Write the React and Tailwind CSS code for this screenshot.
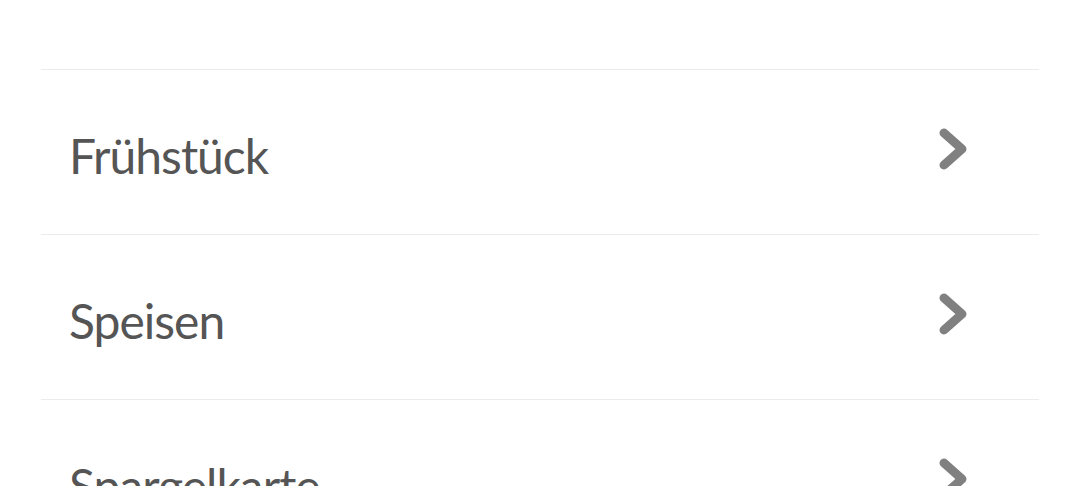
const items = ['Frühstück', 'Speisen', 'Spargelkarte'];

function Chevron() {
  return (
    <svg width="32" height="46" viewBox="0 0 32 46" className="-mt-[6px]">
      <path d="M7 7 L25 23 L7 39" fill="none" stroke="#808080" strokeWidth="9" strokeLinecap="round" strokeLinejoin="round" />
    </svg>
  );
}

export default function App() {
  return (
    <div className="bg-white pt-[69px] px-[41px] overflow-hidden h-[486px]" style={{ fontFamily: 'Lato, sans-serif' }}>
      <ul>
        {items.map((name) => (
          <li key={name} className="border-t border-[#ececec] h-[165px] flex items-center justify-between pl-[28px] pr-[70px]">
            <span className="text-[48px] tracking-[-1px] text-[#555555] leading-none pt-[8px]">{name}</span>
            <Chevron />
          </li>
        ))}
      </ul>
    </div>
  );
}
